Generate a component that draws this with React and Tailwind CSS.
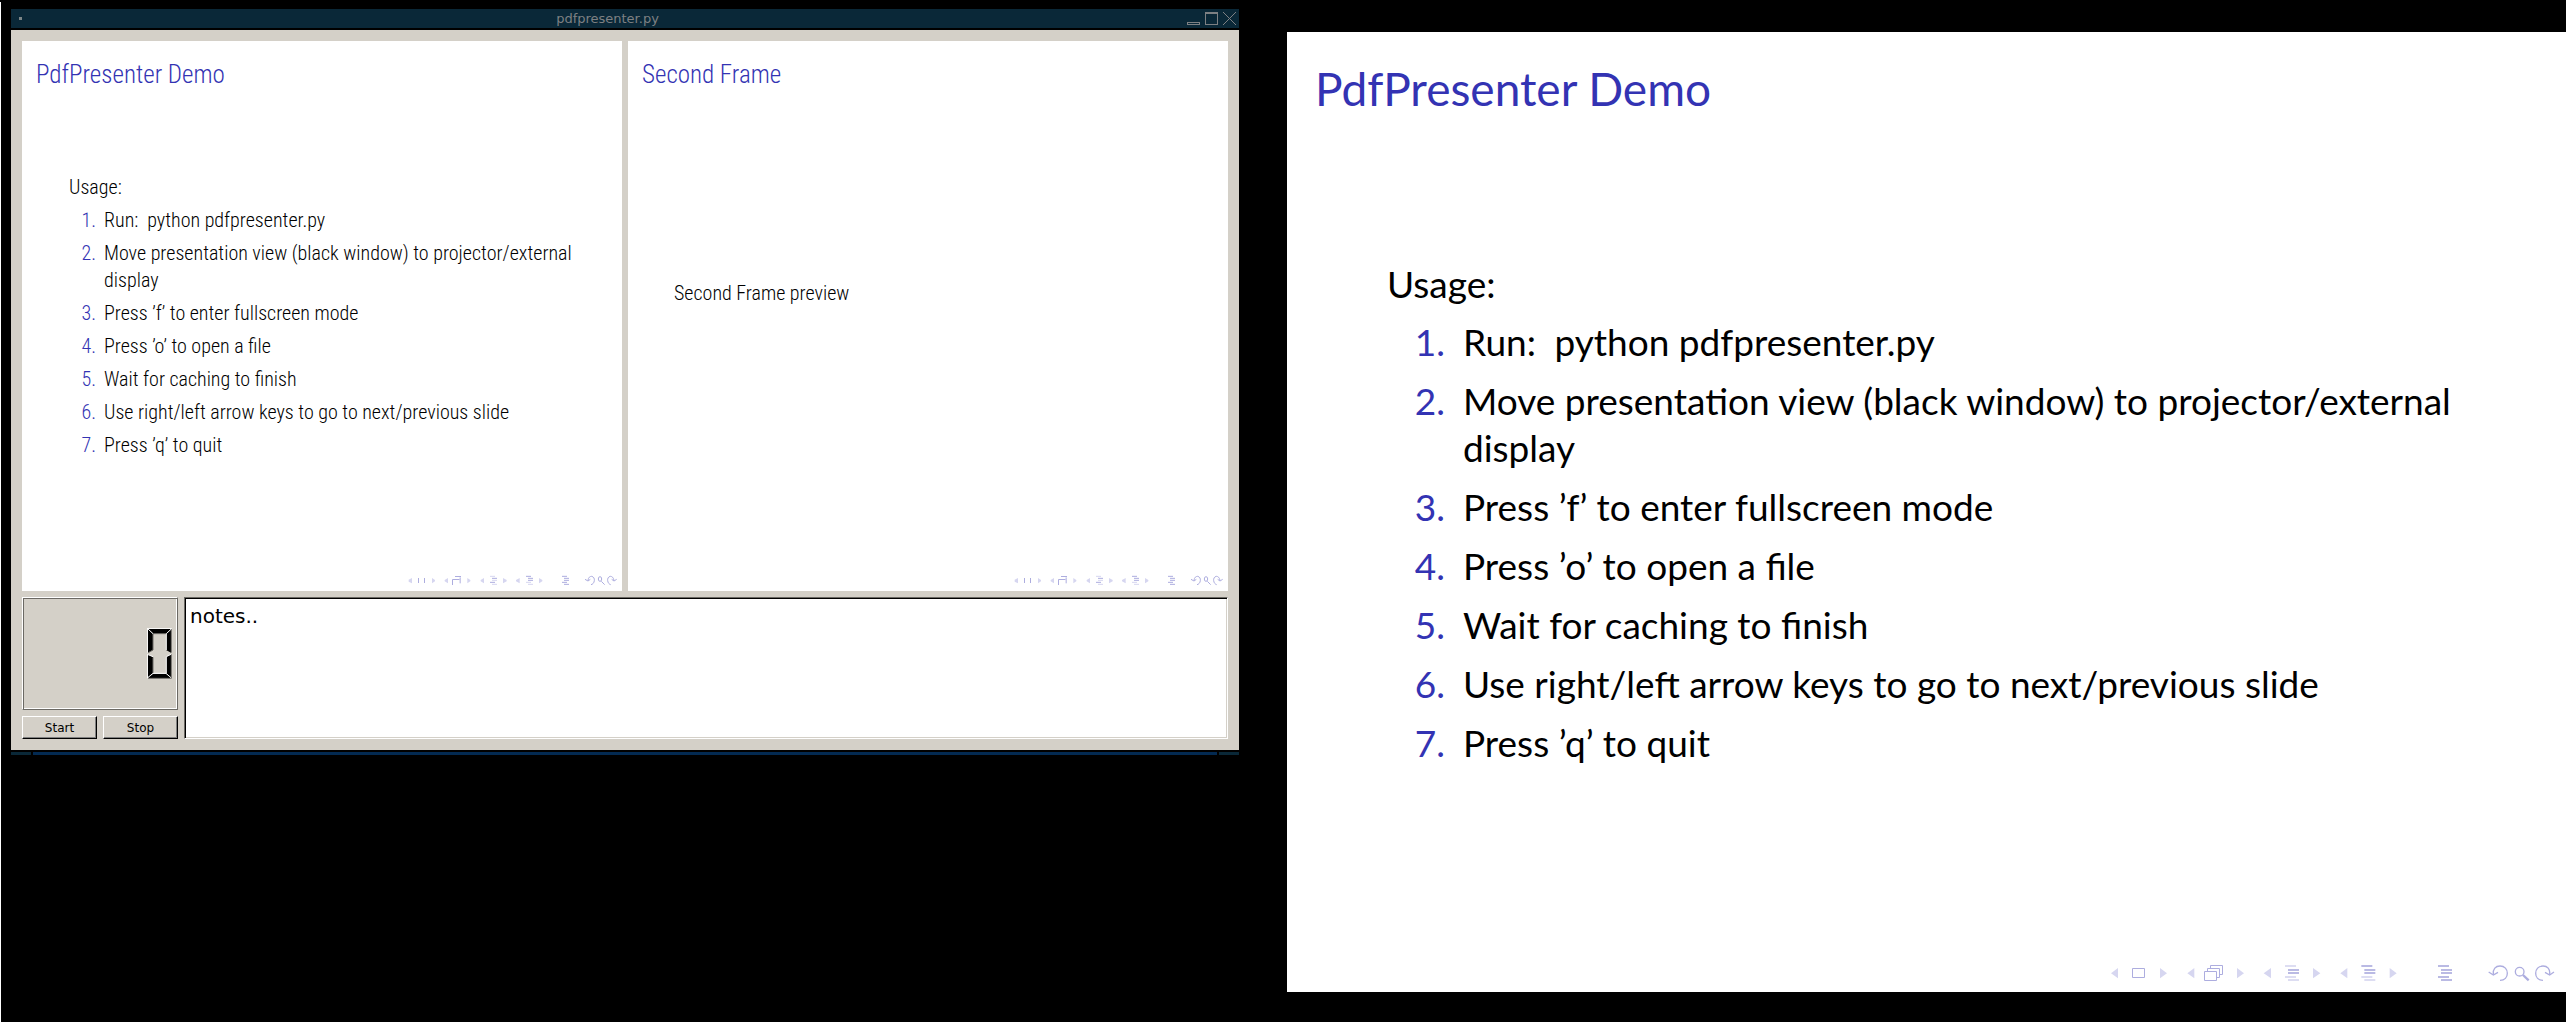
import React from "react";

const STEPS = [
  "Run:\u2002python pdfpresenter.py",
  "Move presentation view (black window) to projector/external display",
  "Press ’f’ to enter fullscreen mode",
  "Press ’o’ to open a file",
  "Wait for caching to finish",
  "Use right/left arrow keys to go to next/previous slide",
  "Press ’q’ to quit",
];

const DARK = "#adaddf";
const LIGHT = "#d6d6f0";

function Lines({ x, colors }) {
  const ys = [75, 87, 96, 108, 117];
  return colors.map((c, i) => {
    const start = i === 0 || i === 3 ? x : x + 9;
    return <path key={i} d={`M${start} ${ys[i]}h33`} stroke={c} strokeWidth="5" />;
  });
}

// Beamer navigation symbols at projector resolution.
function NavSymbols() {
  return (
    <svg className="h-5 w-[447px]" viewBox="60 66 1341 60" fill="none" aria-hidden="true">
      <g fill={LIGHT}>
        <path d="M84 81v31L63 97z" />
        <path d="M210 81v31l21-15z" />
        <path d="M313 81v31l-21-15z" />
        <path d="M441 81v31l21-15z" />
        <path d="M543 81v31l-22-15z" />
        <path d="M669 81v31l22-15z" />
        <path d="M772 81v31l-21-15z" />
        <path d="M899 81v31l21-15z" />
      </g>
      <g stroke={DARK} strokeWidth="3">
        <path d="M127.500 82.500h36v27h-36z" />
        <path d="M343.500 91.500h36v27h-36z" />
        <path d="M352.500 91v-8.500h36v27h-8" />
        <path d="M361.500 82v-8.500h36v27h-8" />
      </g>
      <Lines x={585} colors={[LIGHT, DARK, DARK, LIGHT, LIGHT]} />
      <Lines x={814} colors={[DARK, DARK, DARK, LIGHT, LIGHT]} />
      <Lines x={1044} colors={[DARK, DARK, DARK, DARK, DARK]} />
      <g stroke={DARK} strokeWidth="4">
        <path d="M1210 100C1208 84 1217 75 1230 75C1244 75 1252 85 1252 97C1252 109 1244 118 1230 118" />
        <path d="M1196 93l14 9 14-8" />
        <circle cx="1289" cy="92" r="13" />
        <path d="M1299 102l17 16" strokeWidth="7" />
        <path d="M1379 100C1381 84 1372 75 1359 75C1345 75 1337 85 1337 97C1337 109 1345 118 1359 118" />
        <path d="M1365 94l14 8 13-9" />
      </g>
    </svg>
  );
}

function SmallLines({ x, colors }) {
  return colors.map((c, i) => {
    const start = i === 0 || i === 3 ? x : x + 6;
    return <path key={i} d={`M${start} ${[46, 52, 58, 64, 70][i]}h15`} stroke={c} strokeWidth="3" />;
  });
}

// The same symbols as they come out in the low-resolution previews.
function SmallNavSymbols() {
  return (
    <svg className="h-[11px] w-[210px]" viewBox="84 42 630 33" fill="none" aria-hidden="true">
      <g fill={LIGHT}>
        <path d="M96 51v16l-10-5v-6z" />
        <path d="M156 51v16l9-6v-4z" />
        <path d="M204 51v16l-10-6v-4z" />
        <path d="M262 51v16l9-6v-4z" />
        <path d="M312 51v16l-10-6v-4z" />
        <path d="M369 51v16l11-6v-4z" />
        <path d="M419 51v16l-11-6v-4z" />
        <path d="M477 51v16l10-6v-4z" />
      </g>
      <g stroke={DARK} strokeWidth="3">
        <path d="M115.500 51v15M133.500 51v15" />
        <path d="M225 46.500h18M217.500 72V55.500h21M240.500 49v18" />
      </g>
      <SmallLines x={330} colors={[LIGHT, DARK, LIGHT, DARK, LIGHT]} />
      <SmallLines x={438} colors={[DARK, DARK, DARK, LIGHT, LIGHT]} />
      <SmallLines x={546} colors={[DARK, DARK, DARK, DARK, DARK]} />
      <g stroke={DARK} strokeWidth="3">
        <path d="M624 58C625 49 630 46 635 46C641 47 644 53 643 59C642 66 638 70 633 71" />
        <path d="M615 55l9 5 7-5" />
        <ellipse cx="660" cy="54" rx="5" ry="7" />
        <path d="M664 61l10 10" />
        <path d="M702 58C700 49 696 46 691 46C685 47 682 53 683 59C684 66 688 70 692 71" />
        <path d="M695 55l7 5 8-5" />
      </g>
    </svg>
  );
}

function UsageList({ className, itemClass, numberClass }) {
  return (
    <ol className={className}>
      {STEPS.map((step, i) => (
        <li key={step} className={itemClass}>
          <span className={numberClass}>{i + 1}.</span>
          <span>{step}</span>
        </li>
      ))}
    </ol>
  );
}

function Preview({ title, children }) {
  return (
    <section className="flex aspect-[12/11] min-w-0 flex-1 flex-col bg-white pt-[18px] font-['Roboto_Condensed','Roboto',sans-serif] text-[20px] leading-[27px] font-light text-black">
      <h2 className="pl-[14px] text-[25px] leading-8 text-[#3333b3]">{title}</h2>
      {children}
      <div className="mt-auto flex justify-end pr-1 pb-[5px]">
        <SmallNavSymbols />
      </div>
    </section>
  );
}

function ProjectorSlide() {
  return (
    <section className="mt-8 flex aspect-[1279/960] min-w-0 flex-[1279] flex-col bg-white pt-[27px] font-['Lato',sans-serif] text-[37px] leading-[47px] text-black">
      <h1 className="pl-7 text-[46px] leading-[60px] text-[#3333b3]">PdfPresenter Demo</h1>
      <p className="mt-[141px] pl-[100px]">Usage:</p>
      <UsageList
        className="mt-[11px] flex flex-col gap-3 pr-[90px] pl-[100px]"
        itemClass="flex gap-[18px]"
        numberClass="w-[58px] shrink-0 text-right text-[#3333b3]"
      />
      <div className="mt-auto flex justify-end pr-[9px] pb-[9px]">
        <NavSymbols />
      </div>
    </section>
  );
}

// Seven-segment zero with bevelled edges.
function LcdZero() {
  return (
    <svg className="h-[51px] w-[25px]" viewBox="0 0 75 153" role="img" aria-label="0">
      <g fill="#000">
        <path d="M3 3H72L57 17H18z" />
        <path d="M3 3L18 17V66L3 74z" />
        <path d="M72 3V74L57 66V17z" />
        <path d="M3 79L18 87V137L3 150z" />
        <path d="M72 79V150L57 137V87z" />
        <path d="M3 150L18 137H57L72 150z" />
      </g>
      <g stroke="#6b6964" strokeWidth="3" fill="none">
        <path d="M18 17H57M18 18V66L4 74M18 88V136M73 3V74M73 79V151H3" />
      </g>
      <g stroke="#fff" strokeWidth="3" fill="none">
        <path d="M1 1H74M1 1V74M1 150V79L18 86M1 1L18 17M73 3L58 17V66M58 136V86L72 79M1 150L18 136H57L72 149" />
      </g>
    </svg>
  );
}

function ClassicButton({ children }) {
  return (
    <button
      type="button"
      className="h-[23px] flex-1 border border-t-white border-r-black border-b-black border-l-white bg-[#d4d0c8] text-xs leading-5 text-black shadow-[inset_-1px_-1px_0_#808080]"
    >
      {children}
    </button>
  );
}

function TitleBar() {
  return (
    <header className="flex h-[19px] items-center bg-[#0a2838] pr-[3px] pl-2 text-[#7d8083]">
      <span className="size-[3px] bg-[#7d8688]" />
      <h1 className="flex-1 pl-1.5 text-center text-[13px] leading-[18px]">pdfpresenter.py</h1>
      <div className="flex gap-[5px]">
        <button type="button" aria-label="Minimize" className="flex size-[13px] items-end">
          <span className="h-[3px] w-full border border-[#7d8083]" />
        </button>
        <button type="button" aria-label="Maximize" className="size-[13px] border border-t-2 border-[#7d8083]" />
        <button type="button" aria-label="Close" className="size-[13px]">
          <svg viewBox="0 0 13 13" className="size-full" stroke="#7d8083" fill="none" shapeRendering="crispEdges">
            <path d="M0 0L13 13M13 0L0 13" />
          </svg>
        </button>
      </div>
    </header>
  );
}

function PresenterWindow() {
  return (
    <main className="mt-[9px] min-w-0 flex-[1228] font-['DejaVu_Sans',sans-serif]">
      <TitleBar />
      <div className="mt-0.5 flex flex-col gap-1.5 bg-[#d4d0c8] p-[11px]">
        <div className="flex gap-1.5">
          <Preview title="PdfPresenter Demo">
            <p className="mt-[83px] pl-[47px]">Usage:</p>
            <UsageList
              className="mt-1.5 flex flex-col gap-1.5 pr-[46px] pl-[46px]"
              itemClass="flex gap-2"
              numberClass="w-7 shrink-0 text-right text-[#3333b3]"
            />
          </Preview>
          <Preview title="Second Frame">
            <p className="mt-[189px] pl-[46px]">Second Frame preview</p>
          </Preview>
        </div>
        <div className="flex gap-1.5">
          <div className="flex w-[156px] shrink-0 flex-col gap-1.5">
            <div className="flex h-[113px] items-center justify-end border border-t-white border-r-[#6b6964] border-b-[#6b6964] border-l-white pr-[5px] shadow-[inset_1px_1px_0_#6b6964,inset_-1px_-1px_0_#fff]">
              <LcdZero />
            </div>
            <div className="flex gap-1.5">
              <ClassicButton>Start</ClassicButton>
              <ClassicButton>Stop</ClassicButton>
            </div>
          </div>
          <textarea
            aria-label="Notes"
            defaultValue="notes.."
            className="min-w-0 flex-1 resize-none border border-t-[#6b6964] border-r-white border-b-white border-l-[#6b6964] bg-white px-[5px] py-1.5 text-[20px] leading-6 text-black shadow-[inset_1px_1px_0_#000,inset_-1px_-1px_0_#d4d0c8] outline-none"
          />
        </div>
      </div>
      <div className="mt-0.5 flex h-[3px] gap-0.5">
        <span className="w-5 bg-[#0a2838]" />
        <span className="flex-1 bg-[#032a52]" />
        <span className="w-5 bg-[#0a2838]" />
      </div>
    </main>
  );
}

export default function App() {
  return (
    <div className="flex min-h-screen bg-black">
      <div className="mt-0.5 w-px shrink-0 bg-white" />
      <div className="flex min-w-0 flex-1 items-start gap-12 pl-2.5">
        <PresenterWindow />
        <ProjectorSlide />
      </div>
    </div>
  );
}
